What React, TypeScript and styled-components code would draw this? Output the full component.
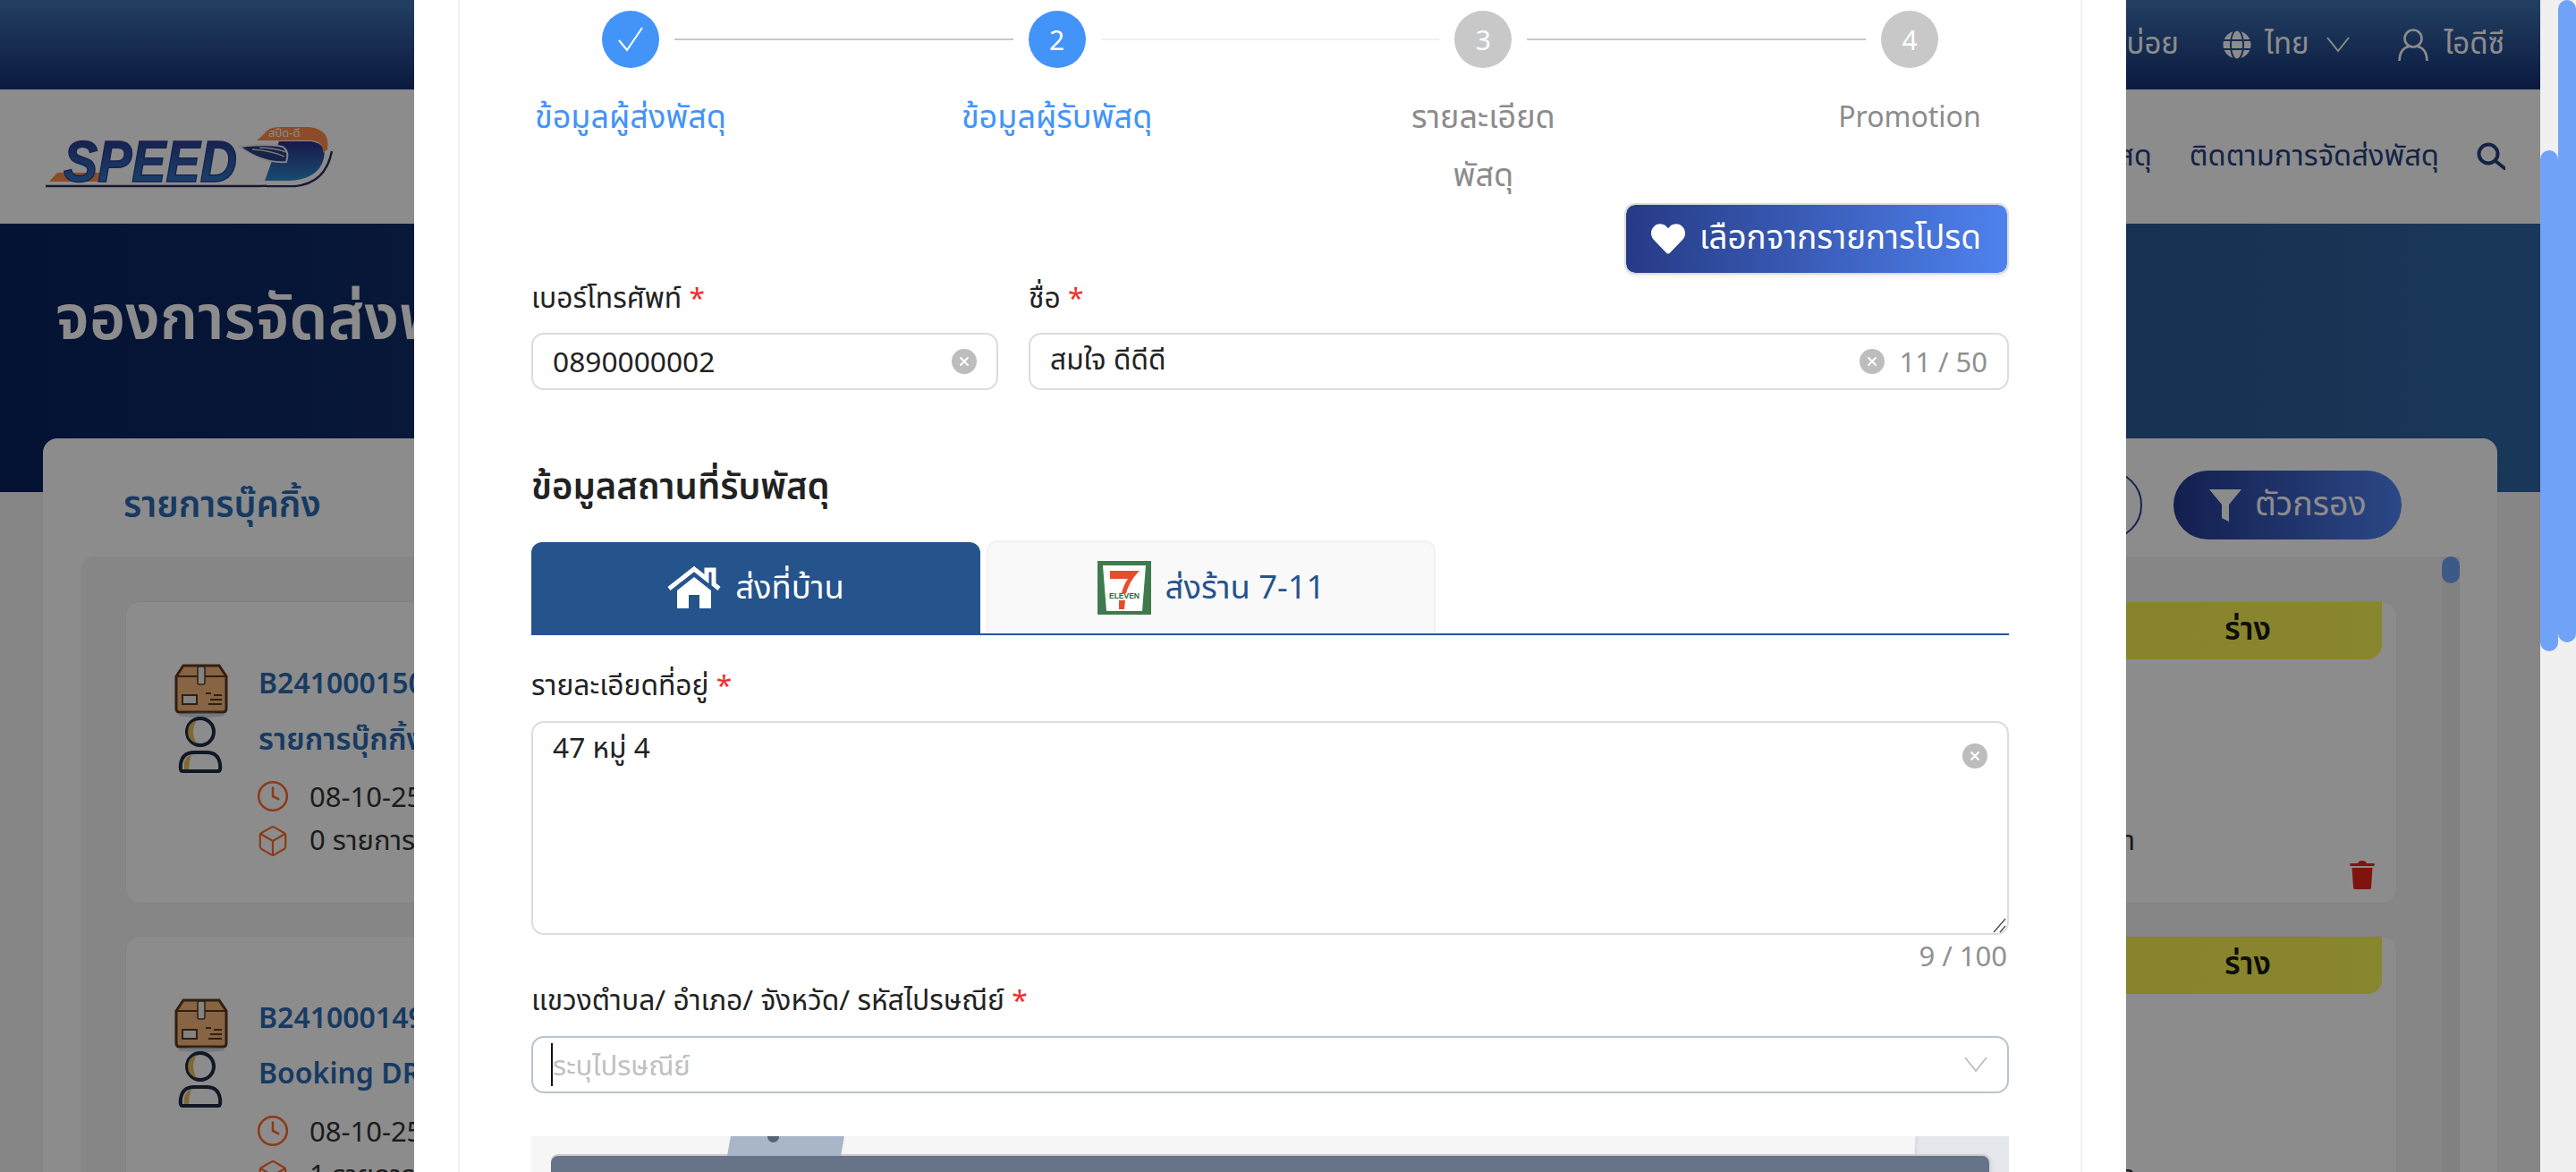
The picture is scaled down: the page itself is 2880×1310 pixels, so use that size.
import React from 'react';
import styled, { createGlobalStyle } from 'styled-components';
import { Box as BoxIcon, Clock } from 'lucide-react';
import { FaGlobe, FaHeart } from 'react-icons/fa';

const fontStack = '"Noto Sans", "Noto Sans Thai", "Noto Sans CJK SC", sans-serif';

const GlobalStyle = createGlobalStyle`
  html, body {
    margin: 0;
    padding: 0;
    width: 2880px;
    height: 1310px;
    overflow: hidden;
    background: #f0f0f0;
    font-family: ${fontStack};
  }
  * { box-sizing: border-box; }
`;

const Screen = styled.div`
  display: flex;
  width: 2880px;
  height: 1310px;
  overflow: hidden;
`;

const Page = styled.div`
  position: relative;
  width: 2840px;
  height: 1310px;
  overflow: hidden;
  background: #f5f5f5;
`;

const ScrollRail = styled.div<{ $top: number }>`
  width: 20px;
  height: 1310px;
  background: #f0f0f0;
  padding-top: ${(props) => props.$top}px;
`;

const ScrollThumb = styled.div<{ $height: number }>`
  width: 20px;
  height: ${(props) => props.$height}px;
  border-radius: 10px;
  background: #70a3f7;
`;

const TopBar = styled.header`
  height: 100px;
  display: flex;
  align-items: center;
  justify-content: flex-end;
  padding-right: 40px;
  background: linear-gradient(180deg, #3f74b2 0%, #142f74 100%);
  color: #fff;
  font-size: 33px;
`;

const TopItem = styled.div<{ $gap: number }>`
  display: flex;
  align-items: center;
  gap: 15px;
  margin-left: ${(props) => props.$gap}px;
`;

const TopChevron = styled.svg`
  width: 26px;
  height: 18px;
  margin-left: 4px;
`;

const UserIcon = styled.svg`
  width: 34px;
  height: 36px;
  margin-right: 3px;
`;

const NavBar = styled.nav`
  height: 150px;
  display: flex;
  align-items: center;
  padding: 0 39px 0 50px;
  background: #fff;
`;

const NavSpacer = styled.div`
  flex: 1;
`;

const NavLink = styled.span`
  font-size: 32.7px;
  color: #25407f;
  margin-right: 42px;
`;

const Hero = styled.section`
  height: 300px;
  padding: 60px 0 0 62px;
  background: linear-gradient(90deg, #09215d 0%, #2f66a2 100%);
`;

const HeroTitle = styled.h1`
  margin: 0;
  font-size: 69px;
  line-height: 84px;
  font-weight: 600;
  color: #fff;
  white-space: nowrap;
`;

const Panel = styled.section`
  margin: -60px 48px 0;
  height: 900px;
  background: #fff;
  border-radius: 16px 16px 0 0;
  box-shadow: 0 0 4px rgba(0, 0, 0, 0.06);
`;

const PanelHeader = styled.div`
  height: 132px;
  padding: 36px 107px 0 90px;
  display: flex;
  align-items: flex-start;
  justify-content: space-between;
`;

const PanelTitle = styled.h2`
  margin: 0;
  font-size: 40px;
  line-height: 73px;
  font-weight: 600;
  color: #2a6bb3;
`;

const PanelActions = styled.div`
  display: flex;
  gap: 35px;
`;

const RoundButton = styled.div`
  width: 76px;
  height: 77px;
  border: 2px solid #2a3f95;
  border-radius: 40px;
`;

const FilterButton = styled.div`
  width: 255px;
  height: 77px;
  display: flex;
  align-items: center;
  gap: 15px;
  padding-left: 40px;
  border-radius: 40px;
  background: linear-gradient(90deg, #23398f 0%, #5083f5 100%);
  color: #fff;
  font-size: 37.5px;
`;

const ListWrap = styled.div`
  margin: 0 42px;
  height: 768px;
  display: flex;
  background: #f4f4f4;
  border-radius: 16px 0 0 0;
`;

const CardList = styled.div`
  flex: 1;
  padding: 50px 50px 0;
  display: flex;
  flex-direction: column;
  gap: 36px;
`;

const ListRail = styled.div`
  width: 20px;
  background: #ececec;
`;

const ListThumb = styled.div`
  height: 30px;
  border-radius: 10px;
  background: #70a3f7;
`;

const Card = styled.article`
  height: 338px;
  flex-shrink: 0;
  display: flex;
  padding: 0 16px 0 54px;
  background: #fff;
  border: 1px solid #efefef;
  border-radius: 16px;
`;

const CardIcon = styled.svg`
  width: 60px;
  height: 124px;
  margin: 69px 34px 0 0;
  flex-shrink: 0;
`;

const CardBody = styled.div`
  flex: 1;
  min-width: 0;
  padding-top: 59px;
`;

const CardCode = styled.div`
  font-size: 32px;
  line-height: 62px;
  font-weight: 600;
  color: #2a6bb3;
  white-space: nowrap;
`;

const CardName = styled(CardCode)<{ $thai: boolean }>`
  font-size: ${(props) => (props.$thai ? 33.5 : 32)}px;
`;

const CardMeta = styled.div<{ $first?: boolean }>`
  display: flex;
  align-items: center;
  height: 50px;
  margin-top: ${(props) => (props.$first ? 9 : 0)}px;
  font-size: 31px;
  color: #333;
  white-space: nowrap;
  svg {
    width: 38px;
    height: 38px;
    margin: 0 22px 0 -3px;
    color: #ff6a2a;
  }
`;

const MetaEnd = styled.span`
  margin-left: auto;
`;

const CardSide = styled.div`
  width: 276px;
  flex-shrink: 0;
  display: flex;
  flex-direction: column;
  justify-content: space-between;
  padding-bottom: 15px;
`;

const StatusTag = styled.div`
  height: 64px;
  margin-left: -24px;
  padding-bottom: 2px;
  display: flex;
  align-items: center;
  justify-content: center;
  background: linear-gradient(90deg, #f7f055 0%, #f7f455 100%);
  border-radius: 0 0 16px 0;
  font-size: 35px;
  font-weight: 600;
  color: #1a1a10;
`;

const TrashIcon = styled.svg`
  width: 28px;
  height: 32px;
  align-self: flex-end;
  margin-right: 8px;
`;

const Backdrop = styled.div`
  position: absolute;
  inset: 0;
  background: rgba(0, 0, 0, 0.45);
`;

const Modal = styled.div`
  position: absolute;
  top: 0;
  left: 463px;
  width: 1914px;
  height: 1310px;
  overflow: hidden;
  padding: 0 49px;
  background: #fff;
`;

const ModalBody = styled.div`
  height: 1310px;
  padding: 12px 80px 0;
  border-left: 2px solid #f2f2f2;
  border-right: 2px solid #f2f2f2;
`;

const StepTrack = styled.div`
  display: flex;
  align-items: center;
  padding: 0 79px;
`;

const StepDot = styled.div<{ $active: boolean }>`
  width: 64px;
  height: 64px;
  flex-shrink: 0;
  display: flex;
  align-items: center;
  justify-content: center;
  border-radius: 50%;
  background: ${(props) => (props.$active ? '#4394f9' : '#c8c8c8')};
  color: #fff;
  font-size: 30px;
`;

const StepLine = styled.div<{ $faint?: boolean }>`
  flex: 1;
  height: 2px;
  margin: 0 17px;
  background: ${(props) => (props.$faint ? '#f0f0f0' : '#c8c8c8')};
`;

const StepLabels = styled.div`
  display: flex;
  justify-content: space-between;
  margin-top: 21px;
`;

const StepLabel = styled.div<{ $active: boolean; $latin?: boolean }>`
  width: 222px;
  text-align: center;
  white-space: nowrap;
  font-size: ${(props) => (props.$latin ? 32 : 36)}px;
  line-height: 65px;
  color: ${(props) => (props.$active ? '#4394f9' : '#8c8c8c')};
`;

const FavouriteRow = styled.div`
  height: 83px;
  display: flex;
  justify-content: flex-end;
`;

const FavouriteButton = styled.div`
  width: 430px;
  height: 80px;
  display: flex;
  align-items: center;
  gap: 16px;
  padding-left: 28px;
  border: 2px solid #dcdcdc;
  border-radius: 12px;
  background: linear-gradient(90deg, #263a85 0%, #4f82ee 100%);
  background-clip: padding-box;
  box-shadow: 0 3px 4px rgba(0, 0, 0, 0.05);
  color: #fff;
  font-size: 36.8px;
  white-space: nowrap;
`;

const FieldRow = styled.div`
  display: grid;
  grid-template-columns: 522px 1fr;
  gap: 34px;
`;

const FieldLabel = styled.div`
  font-size: 31.8px;
  line-height: 44px;
  margin-bottom: 18px;
  color: #222;
`;

const Required = styled.span`
  color: #f02c2c;
`;

const InputBox = styled.div<{ $focus?: boolean }>`
  height: 64px;
  display: flex;
  align-items: center;
  padding: 0 22px;
  gap: 16px;
  border: 2px solid ${(props) => (props.$focus ? '#b8c4d2' : '#dcdcdc')};
  border-radius: 14px;
  font-size: 31.7px;
  color: #222;
`;

const InputValue = styled.span`
  flex: 1;
  margin-top: -2px;
`;

const Placeholder = styled.span`
  flex: 1;
  font-size: 31px;
  color: #c0c0c0;
  border-left: 2px solid #111;
  margin-left: -2px;
  line-height: 48px;
`;

const Counter = styled.span`
  color: #909090;
  font-size: 31px;
`;

const ClearIcon = styled.svg`
  width: 28px;
  height: 28px;
  flex-shrink: 0;
`;

const SectionTitle = styled.h3`
  margin: 77px 0 31px;
  font-size: 40px;
  line-height: 60px;
  font-weight: 600;
  color: #222;
`;

const TabStrip = styled.div`
  display: flex;
  align-items: flex-end;
  gap: 7px;
  height: 106px;
  border-bottom: 2px solid #25549a;
`;

const HomeTab = styled.div`
  width: 502px;
  height: 102px;
  display: flex;
  align-items: center;
  justify-content: center;
  gap: 16px;
  background: #25538c;
  border-radius: 12px 12px 0 0;
  color: #fff;
  font-size: 36.4px;
`;

const ShopTab = styled.div`
  width: 502px;
  height: 104px;
  display: flex;
  align-items: center;
  justify-content: center;
  gap: 16px;
  background: #f9f9f9;
  border: 2px solid #f2f2f2;
  border-bottom: 0;
  border-radius: 12px 12px 0 0;
  color: #25538c;
  font-size: 36.4px;
`;

const AddressLabel = styled(FieldLabel)`
  margin-top: 33px;
  margin-bottom: 19px;
`;

const AreaBox = styled.div`
  position: relative;
  height: 239px;
  padding: 7px 22px;
  border: 2px solid #dcdcdc;
  border-radius: 14px;
  display: flex;
  gap: 16px;
  font-size: 31.7px;
  line-height: 44px;
  color: #222;
`;

const AreaClear = styled(ClearIcon)`
  margin-top: 16px;
`;

const ResizeGrip = styled.svg`
  position: absolute;
  right: 0;
  bottom: 0;
  width: 18px;
  height: 18px;
`;

const AreaCounter = styled.div`
  margin-top: 3px;
  text-align: right;
  padding-right: 2px;
  line-height: 40px;
  font-size: 31px;
  color: #909090;
`;

const PostLabel = styled(FieldLabel)`
  margin-top: 7px;
  margin-bottom: 19px;
`;

const ChevronIcon = styled.svg`
  width: 26px;
  height: 18px;
  flex-shrink: 0;
`;

const MapPreview = styled.div`
  position: relative;
  margin-top: 48px;
  height: 60px;
  padding: 22px 22px 0;
  overflow: hidden;
  background: linear-gradient(94deg, #f6f6f6 0%, #f6f6f6 93.4%, #d8d9e2 93.5%, #e6e7ec 93.7%);
`;

const MapPin = styled.div`
  position: absolute;
  top: 0;
  left: 219px;
  width: 131px;
  height: 22px;
  background: #a9b6c8;
  clip-path: polygon(3% 0, 100% 0, 97% 100%, 0 100%);

  &::before {
    content: '';
    position: absolute;
    top: -6px;
    left: 45px;
    width: 13px;
    height: 13px;
    border-radius: 50%;
    background: #55627a;
  }
`;

const MapBar = styled.div`
  height: 60px;
  background: #667389;
  border-radius: 8px 8px 0 0;
  box-shadow: 0 -2px 0 #ccc, 2px 0 4px rgba(0, 0, 0, 0.1);
`;

const LogoSvg = styled.svg`
  width: 322px;
  height: 72px;
  flex-shrink: 0;
`;

const bookings = [
  { code: 'B241000150', name: 'รายการบุ๊กกิ้ง ทดสอบ', thai: true, date: '08-10-25 10:30', count: '0 รายการ', trash: true },
  { code: 'B241000149', name: 'Booking DRY ทดสอบ', thai: false, date: '08-10-25 09:15', count: '1 รายการ', trash: false },
];

const steps = [
  { label: 'check', active: true },
  { label: '2', active: true },
  { label: '3', active: false },
  { label: '4', active: false },
];

const Clear = () => (
  <>
    <circle cx="14" cy="14" r="14" fill="#bdbdbd" />
    <path d="M10 10l8 8M18 10l-8 8" stroke="#fff" strokeWidth="2" strokeLinecap="round" />
  </>
);

const ParcelPerson = () => (
  <CardIcon viewBox="0 0 60 124">
    <path d="M2 14 L10 2 H50 L58 14 V50 Q58 54 54 54 H6 Q2 54 2 50 Z" fill="#f5b67c" stroke="#5c3a1e" strokeWidth="3" />
    <path d="M2 14 H58" stroke="#5c3a1e" strokeWidth="2" />
    <rect x="26" y="3" width="8" height="20" rx="2" fill="#eee" stroke="#5c3a1e" strokeWidth="1.5" />
    <rect x="9" y="35" width="16" height="10" fill="#eee" stroke="#5c3a1e" strokeWidth="2" />
    <path d="M35 33h6M44 35h9M40 40h13M38 45h15" stroke="#5c3a1e" strokeWidth="2" />
    <ellipse cx="30" cy="57" rx="26" ry="3" fill="#8fa4bf" opacity="0.4" />
    <circle cx="29" cy="76" r="15" fill="#fff" stroke="#1f2a44" strokeWidth="4" />
    <path d="M25 63 Q17 76 25 89 Q15 86 15 76 Q15 66 25 63Z" fill="#e9bd5c" />
    <path d="M9 120 Q6 120 7 112 Q9 99 22 99 H36 Q49 99 51 112 Q52 120 49 120 Z" fill="#fff" stroke="#1f2a44" strokeWidth="4" />
    <path d="M11 118 Q9 106 19 101 Q16 110 16 118Z" fill="#e9bd5c" />
  </CardIcon>
);

const SpeedLogo = () => (
  <LogoSvg viewBox="0 0 322 72">
    <defs>
      <linearGradient id="speedFill" x1="0" y1="0" x2="0" y2="1">
        <stop offset="0" stopColor="#2b2f86" />
        <stop offset="1" stopColor="#3088d0" />
      </linearGradient>
    </defs>
    <path d="M1 69 H240 Q262 69 272 63M248 69 H280 Q314 66 321 30" fill="none" stroke="#2b2f60" strokeWidth="2.5" />
    <path d="M3 67 H236 L250 56 V16 H12 Z" fill="#fff" />
    <path d="M248 68 H278 Q312 64 319 30 L320 10 L240 2 Z" fill="#fff" />
    <path d="M5 64 L14 54 H66 L60 64Z" fill="#ff8a4a" />
    <text x="21" y="64" fontSize="64" fontWeight="700" fontStyle="italic" fontFamily="Liberation Sans, sans-serif" textLength="194" lengthAdjust="spacingAndGlyphs" fill="url(#speedFill)" stroke="#2b3f96" strokeWidth="1.5">SPEED</text>
    <path d="M262 19 H298 Q316 22 312 38 Q306 62 272 63 H246 Z" fill="url(#speedFill)" />
    <path d="M246 10 Q250 3 262 3 H296 Q320 6 316 28 L311 32 Q312 18 296 18 H237 Z" fill="#ff8a4a" />
    <text x="250" y="14" fontSize="13" fill="#fff" fontFamily={fontStack}>สปีด-ดี</text>
    <path d="M218 25 Q250 21 266 25 Q274 30 270 42 Q244 44 218 25Z" fill="#2b3f86" stroke="#eee" strokeWidth="2" />
    <path d="M232 28 Q252 29 268 36M240 26 Q256 26 270 31" stroke="#ddd" strokeWidth="1.5" fill="none" />
  </LogoSvg>
);

const SevenEleven = () => (
  <svg width="60" height="60" viewBox="0 0 60 60">
    <rect width="60" height="60" fill="#3f7a4c" />
    <path d="M6 5 H54 L50 56 H10 Z" fill="#fff" />
    <path d="M14 11 H47 Q36 22 32 36 H27 Q29 27 34 20 H14 Z" fill="#e2502b" />
    <path d="M24 44 H31 L30 54 H24 Z" fill="#e2502b" />
    <text x="30" y="42" textAnchor="middle" fontSize="8.5" fontWeight="700" fill="#1f6a3a" fontFamily="Liberation Sans, sans-serif">ELEVEN</text>
  </svg>
);

const App = () => (
  <Screen>
    <GlobalStyle />
    <Page>
      <TopBar>
        <span>คำถามที่พบบ่อย</span>
        <TopItem $gap={49}>
          <FaGlobe size={32} />
          <span>ไทย</span>
          <TopChevron viewBox="0 0 26 18">
            <path d="M1 1 L13 16 L25 1" fill="none" stroke="#fff" strokeWidth="2" />
          </TopChevron>
        </TopItem>
        <TopItem $gap={54}>
          <UserIcon viewBox="0 0 34 36">
            <circle cx="17" cy="11" r="9.5" fill="none" stroke="#fff" strokeWidth="2.6" />
            <path d="M1.5 36 Q2 22 12 20M32.5 36 Q32 22 22 20" fill="none" stroke="#fff" strokeWidth="2.6" />
          </UserIcon>
          <span>ไอดีซี</span>
        </TopItem>
      </TopBar>
      <NavBar>
        <SpeedLogo />
        <NavSpacer />
        <NavLink>จองการจัดส่งพัสดุ</NavLink>
        <NavLink>ติดตามการจัดส่งพัสดุ</NavLink>
        <svg width="32" height="32" viewBox="0 0 32 32">
          <circle cx="13" cy="13" r="10.5" fill="none" stroke="#25407f" strokeWidth="4" />
          <path d="M21 21 L31 29" stroke="#25407f" strokeWidth="4" strokeLinecap="round" />
        </svg>
      </NavBar>
      <Hero>
        <HeroTitle>จองการจัดส่งพัสดุ</HeroTitle>
      </Hero>
      <Panel>
        <PanelHeader>
          <PanelTitle>รายการบุ๊คกิ้ง</PanelTitle>
          <PanelActions>
            <RoundButton />
            <FilterButton>
              <svg width="36" height="36" viewBox="0 0 36 36">
                <path d="M0 0 H36 L22 17 V36 L14 32 V17 Z" fill="#fff" />
              </svg>
              <span>ตัวกรอง</span>
            </FilterButton>
          </PanelActions>
        </PanelHeader>
        <ListWrap>
          <CardList>
            {bookings.map((item) => (
              <Card key={item.code}>
                <ParcelPerson />
                <CardBody>
                  <CardCode>{item.code}</CardCode>
                  <CardName $thai={item.thai}>{item.name}</CardName>
                  <CardMeta $first>
                    <Clock strokeWidth={1.6} />
                    {item.date}
                  </CardMeta>
                  <CardMeta>
                    <BoxIcon strokeWidth={1.4} />
                    {item.count}
                    <MetaEnd>ยังไม่ชำระค่า</MetaEnd>
                  </CardMeta>
                </CardBody>
                <CardSide>
                  <StatusTag>ร่าง</StatusTag>
                  {item.trash && (
                    <TrashIcon viewBox="0 0 28 32">
                      <path d="M0 4 Q0 3 2 3 H9 Q10 0 14 0 Q18 0 19 3 H26 Q28 3 28 4 Q28 6 26 6 H2 Q0 6 0 4Z" fill="#e7261a" />
                      <path d="M2.5 8 H25.5 L24 30 Q24 32 22 32 H6 Q4 32 4 30Z" fill="#e7261a" />
                    </TrashIcon>
                  )}
                </CardSide>
              </Card>
            ))}
          </CardList>
          <ListRail>
            <ListThumb />
          </ListRail>
        </ListWrap>
      </Panel>
      <Backdrop />
      <Modal>
        <ModalBody>
          <StepTrack>
            {steps.map((step, i) => (
              <React.Fragment key={step.label}>
                <StepDot $active={step.active}>
                  {step.label === 'check' ? (
                    <svg width="30" height="30" viewBox="0 0 30 30">
                      <path d="M2 16 L11 27 L28 2" fill="none" stroke="#fff" strokeWidth="2" />
                    </svg>
                  ) : step.label}
                </StepDot>
                {i < steps.length - 1 && <StepLine $faint={i === 1} />}
              </React.Fragment>
            ))}
          </StepTrack>
          <StepLabels>
            <StepLabel $active>ข้อมูลผู้ส่งพัสดุ</StepLabel>
            <StepLabel $active>ข้อมูลผู้รับพัสดุ</StepLabel>
            <StepLabel $active={false}>รายละเอียด<br />พัสดุ</StepLabel>
            <StepLabel $active={false} $latin>Promotion</StepLabel>
          </StepLabels>
          <FavouriteRow>
            <FavouriteButton>
              <FaHeart size={38} />
              <span>เลือกจากรายการโปรด</span>
            </FavouriteButton>
          </FavouriteRow>
          <FieldRow>
            <div>
              <FieldLabel>เบอร์โทรศัพท์ <Required>*</Required></FieldLabel>
              <InputBox>
                <InputValue>0890000002</InputValue>
                <ClearIcon viewBox="0 0 28 28"><Clear /></ClearIcon>
              </InputBox>
            </div>
            <div>
              <FieldLabel>ชื่อ <Required>*</Required></FieldLabel>
              <InputBox>
                <InputValue>สมใจ ดีดีดี</InputValue>
                <ClearIcon viewBox="0 0 28 28"><Clear /></ClearIcon>
                <Counter>11 / 50</Counter>
              </InputBox>
            </div>
          </FieldRow>
          <SectionTitle>ข้อมูลสถานที่รับพัสดุ</SectionTitle>
          <TabStrip>
            <HomeTab>
              <svg width="60" height="48" viewBox="0 0 60 48">
                <path d="M2 25 L30 3 L44 14 V4 H52 V20 L58 25" fill="none" stroke="#fff" strokeWidth="5" />
                <path d="M11 27 L30 12 L49 27 V47 H36 V32 H24 V47 H11 Z" fill="#fff" />
              </svg>
              <span>ส่งที่บ้าน</span>
            </HomeTab>
            <ShopTab>
              <SevenEleven />
              <span>ส่งร้าน 7-11</span>
            </ShopTab>
          </TabStrip>
          <AddressLabel>รายละเอียดที่อยู่ <Required>*</Required></AddressLabel>
          <AreaBox>
            <InputValue>47 หมู่ 4</InputValue>
            <AreaClear viewBox="0 0 28 28"><Clear /></AreaClear>
            <ResizeGrip viewBox="0 0 18 18">
              <path d="M3 17 L16 2M10 17 L16 10" stroke="#444" strokeWidth="1.2" />
            </ResizeGrip>
          </AreaBox>
          <AreaCounter>9 / 100</AreaCounter>
          <PostLabel>แขวงตำบล/ อำเภอ/ จังหวัด/ รหัสไปรษณีย์ <Required>*</Required></PostLabel>
          <InputBox $focus>
            <Placeholder>ระบุไปรษณีย์</Placeholder>
            <ChevronIcon viewBox="0 0 26 18">
              <path d="M1 1 L13 16 L25 1" fill="none" stroke="#c0c0c0" strokeWidth="2" />
            </ChevronIcon>
          </InputBox>
          <MapPreview>
            <MapPin />
            <MapBar />
          </MapPreview>
        </ModalBody>
      </Modal>
    </Page>
    <ScrollRail $top={168}><ScrollThumb $height={560} /></ScrollRail>
    <ScrollRail $top={0}><ScrollThumb $height={718} /></ScrollRail>
  </Screen>
);

export default App;
